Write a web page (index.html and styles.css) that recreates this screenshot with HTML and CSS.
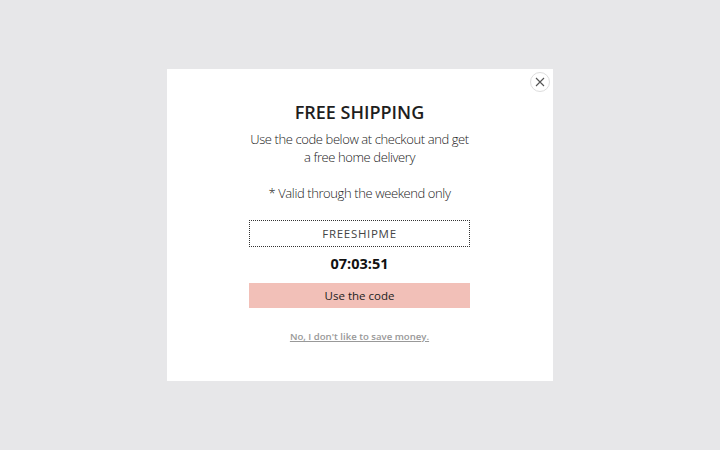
FILE: index.html
```html
<!DOCTYPE html>
<html>
<head>
<meta charset="utf-8">
<link rel="stylesheet" href="styles.css">
</head>
<body>
<div class="stage">
  <div class="modal">
    <button class="close" aria-label="Close">
      <svg width="10" height="10" viewBox="0 0 10 10"><path d="M1 1L9 9M9 1L1 9" stroke="#555" stroke-width="1.1" fill="none"/></svg>
    </button>
    <h1 class="title">FREE SHIPPING</h1>
    <p class="sub">Use the code below at checkout and get<br>a free home delivery</p>
    <p class="valid">* Valid through the weekend only</p>
    <div class="code">FREESHIPME</div>
    <div class="timer">07:03:51</div>
    <button class="cta">Use the code</button>
    <a class="decline" href="#">No, I don't like to save money.</a>
  </div>
</div>
</body>
</html>
```
FILE: styles.css
```css
html, body { margin: 0; padding: 0; }
body {
  width: 720px; height: 450px;
  background: #e7e7e9;
  font-family: "Open Sans", "Liberation Sans", sans-serif;
  color: #222;
}
.stage {
  height: 450px;
  display: flex;
  align-items: flex-start;
  justify-content: center;
  padding-top: 69px;
  box-sizing: border-box;
}
.modal {
  position: relative;
  width: 386px;
  height: 312px;
  background: #fff;
  display: flex;
  flex-direction: column;
  align-items: center;
  padding-top: 32px;
  box-sizing: border-box;
  margin-left: -1px;
}
.close {
  position: absolute;
  top: 3px; right: 3px;
  width: 20px; height: 20px;
  border-radius: 50%;
  border: 1px solid #ddd;
  background: #fff;
  padding: 0;
  display: flex; align-items: center; justify-content: center;
}
.title {
  margin: 0;
  font-size: 18px;
  font-weight: 600;
  line-height: 22px;
  color: #1e1e1e;
}
.sub {
  margin: 7px 0 0;
  font-size: 13px;
  font-weight: 300;
  line-height: 18px;
  text-align: center;
  color: #222;
  letter-spacing: -0.4px;
}
.valid {
  margin: 18px 0 0;
  font-size: 13px;
  font-weight: 300;
  line-height: 18px;
  color: #222;
  letter-spacing: -0.4px;
}
.code {
  margin-top: 18px;
  width: 221px;
  height: 27px;
  box-sizing: border-box;
  border: 1px dotted #333;
  display: flex; align-items: center; justify-content: center;
  font-size: 11.5px;
  letter-spacing: 0.7px;
  color: #444;
}
.timer {
  margin-top: 8px;
  font-size: 14.5px;
  font-weight: 700;
  line-height: 18px;
  color: #111;
}
.cta {
  margin-top: 10px;
  width: 221px;
  height: 25px;
  border: 0;
  background: #f2c0b8;
  font-family: inherit;
  font-size: 11.5px;
  color: #222;
  padding: 0;
}
.decline {
  margin-top: 22px;
  font-size: 9.6px;
  font-weight: 600;
  color: #999;
  text-decoration: underline;
}
```
